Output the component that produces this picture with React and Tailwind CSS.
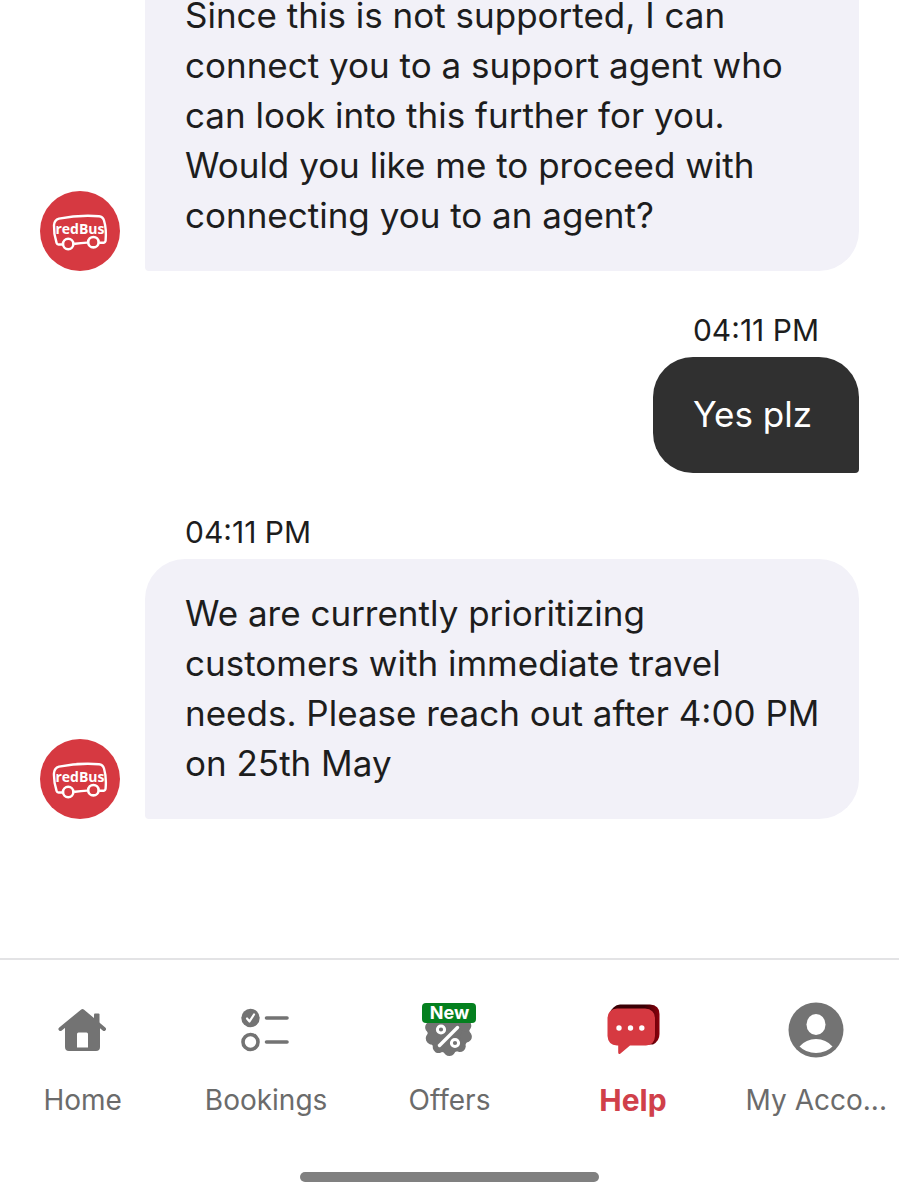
const BusLogo = () => {
  return (
    <svg viewBox="0 0 80 80" className="size-20 shrink-0" role="img" aria-label="redBus">
      <circle cx="40" cy="40" r="40" fill="#d63941" />
      <path
        d="M22 53.500H18.500Q17 53.500 16.600 52Q13.600 43 14 34Q14.300 29 19 27.600Q38 23.800 59 25.200Q62.800 25.600 64 29.500Q66.600 38 65.600 49.500Q65.400 51.500 63.700 51.700H60M35 52.800Q41 51.800 47 51.600"
        fill="none"
        stroke="#fff"
        strokeWidth="2.400"
        strokeLinecap="round"
        strokeLinejoin="round"
      />
      <circle cx="28.200" cy="53" r="5.200" fill="none" stroke="#fff" strokeWidth="2.600" />
      <circle cx="53.400" cy="51.200" r="5.200" fill="none" stroke="#fff" strokeWidth="2.600" />
      <text
        x="40"
        y="43"
        textAnchor="middle"
        fill="#fff"
        fontSize="14"
        fontWeight="700"
        fontFamily="Open Sans, sans-serif"
      >
        redBus
      </text>
    </svg>
  )
}

const HomeIcon = () => {
  return (
    <svg viewBox="0 0 60 60" className="size-15" fill="#737373" aria-hidden="true">
      <path
        d="M7.500 29L29.500 11L51 29"
        fill="none"
        stroke="#737373"
        strokeWidth="4"
        strokeLinecap="round"
        strokeLinejoin="round"
      />
      <path d="M41 14.500Q41 13.500 42 13.500H45.500Q46.500 13.500 46.500 14.500V26H41Z" />
      <path
        fillRule="evenodd"
        d="M29.500 11L47 25V47Q47 51 43 51H16Q12 51 12 47V25ZM25.500 32.500Q24 32.500 24 34V47.500H35V34Q35 32.500 33.500 32.500Z"
      />
    </svg>
  )
}

const BookingsIcon = () => {
  return (
    <svg viewBox="0 0 60 60" className="size-15" fill="none" stroke="#737373" aria-hidden="true">
      <circle cx="14.500" cy="18" r="9.200" fill="#737373" stroke="none" />
      <path d="M11 18.500L13.500 21.500L18 14.500" stroke="#fff" strokeWidth="2.200" strokeLinecap="round" strokeLinejoin="round" />
      <circle cx="14.500" cy="42" r="7.500" strokeWidth="3.600" />
      <path d="M30.500 18H51M30.500 42H51" strokeWidth="3.600" strokeLinecap="round" />
    </svg>
  )
}

// angles of the bumps round the discount badge
const bumps = [15, 51, 87, 123, 159, 195, 231, 267, 303, 339]

const OffersIcon = () => {
  return (
    <span className="relative">
      <svg viewBox="0 0 60 60" className="size-15" fill="#737373" aria-hidden="true">
        <circle cx="29.500" cy="32" r="21" />
        {bumps.map((angle) => (
          <circle key={angle} cx="47.500" cy="32" r="6" transform={`rotate(${angle} 29.500 32)`} />
        ))}
        <g fill="none" stroke="#fff" strokeLinecap="round">
          <path d="M38.500 27.500L20.500 45.500" strokeWidth="3.400" />
          <circle cx="22" cy="29.500" r="3.600" strokeWidth="3" />
          <circle cx="36" cy="43" r="3.600" strokeWidth="3" />
        </g>
      </svg>
      <span className="absolute inset-x-[3px] top-[3px] h-5 rounded-sm bg-[#04801f] text-center text-lg leading-5 font-bold text-white">
        New
      </span>
    </span>
  )
}

const HelpIcon = () => {
  return (
    <svg viewBox="0 0 60 60" className="size-15" aria-hidden="true">
      <defs>
        <linearGradient id="shade" x1="0" y1="0" x2="1" y2="0">
          <stop offset="0.700" stopColor="#3a0005" />
          <stop offset="1" stopColor="#8c000c" />
        </linearGradient>
      </defs>
      <path
        d="M17 4.500H47Q56.500 5 56.500 14V34Q56.500 41 50 44.500H18Q9 40 6 30V14Q10 5 17 4.500Z"
        fill="url(#shade)"
      />
      <path
        d="M14 8.500H42Q51.500 9 52 18V36Q51.500 45 43 45.500H27L17.500 53.500Q15.500 55 15.200 52.500V45.500H14Q5 45 4.500 36V18Q5 9 14 8.500Z"
        fill="#d63941"
      />
      <g fill="#fff">
        <circle cx="16" cy="28" r="2.700" />
        <circle cx="27.500" cy="28" r="2.700" />
        <circle cx="38.800" cy="28" r="2.700" />
      </g>
    </svg>
  )
}

const AccountIcon = () => {
  return (
    <svg viewBox="0 0 60 60" className="size-15" aria-hidden="true">
      <circle cx="30" cy="30" r="27.500" fill="#737373" />
      <ellipse cx="30" cy="24.500" rx="9.500" ry="10.500" fill="#fff" />
      <path d="M13.500 46.500Q20 39 30 39Q40 39 46.500 46.500Q40 53 30 53Q20 53 13.500 46.500Z" fill="#fff" />
    </svg>
  )
}

const BotMessage = ({ time, children }) => {
  return (
    <div>
      {time && <p className="mb-[7px] pl-[145px] text-[30px] leading-10">{time}</p>}
      <div className="flex items-end gap-[25px]">
        <BusLogo />
        <p className="flex-1 rounded-[40px] rounded-bl-sm bg-[#f2f1f8] pt-[29px] pr-9 pb-[31px] pl-10 text-[35px] leading-[50px]">
          {children}
        </p>
      </div>
    </div>
  )
}

const UserMessage = ({ time, children }) => {
  return (
    <div className="flex flex-col self-end">
      <p className="mb-[7px] px-10 text-[30px] leading-10">{time}</p>
      <p className="rounded-[40px] rounded-br-sm bg-[#303030] px-10 pt-8 pb-[34px] text-[35px] leading-[50px] text-white">
        {children}
      </p>
    </div>
  )
}

const tabs = [
  { label: 'Home', icon: HomeIcon },
  { label: 'Bookings', icon: BookingsIcon },
  { label: 'Offers', icon: OffersIcon },
  { label: 'Help', icon: HelpIcon, active: true },
  { label: 'My Acco...', icon: AccountIcon },
]

const App = () => {
  return (
    <div className="flex h-screen flex-col overflow-hidden bg-white font-['Inter',sans-serif] text-[#1d1d1d]">
      <main className="flex min-h-0 flex-1 flex-col justify-end gap-[39px] overflow-hidden px-10 pb-[139px]">
        <BotMessage>
          Since this is not supported, I can connect you to a support agent who
          can look into this further for you. Would you like me to proceed with
          connecting you to an agent?
        </BotMessage>
        <UserMessage time="04:11 PM">Yes plz</UserMessage>
        <BotMessage time="04:11 PM">
          We are currently prioritizing customers with immediate travel needs.
          Please reach out after 4:00 PM on 25th May
        </BotMessage>
      </main>

      <footer className="border-t-2 border-[#e3e3e5] pt-10 pb-[18px]">
        <nav className="-mx-[9px] grid grid-cols-5">
          {tabs.map(({ label, icon: Icon, active }) => (
            <a
              key={label}
              href="#"
              aria-current={active ? 'page' : undefined}
              className={
                active
                  ? 'flex flex-col items-center gap-5 text-[30px] leading-10 font-bold text-[#d0404a]'
                  : 'flex flex-col items-center gap-5 text-[28px] leading-10 text-[#6b6b6b]'
              }
            >
              <Icon />
              <span>{label}</span>
            </a>
          ))}
        </nav>
        <div className="mx-auto mt-[52px] h-[10px] w-1/3 rounded-full bg-[#808080]"></div>
      </footer>
    </div>
  )
}

export default App
